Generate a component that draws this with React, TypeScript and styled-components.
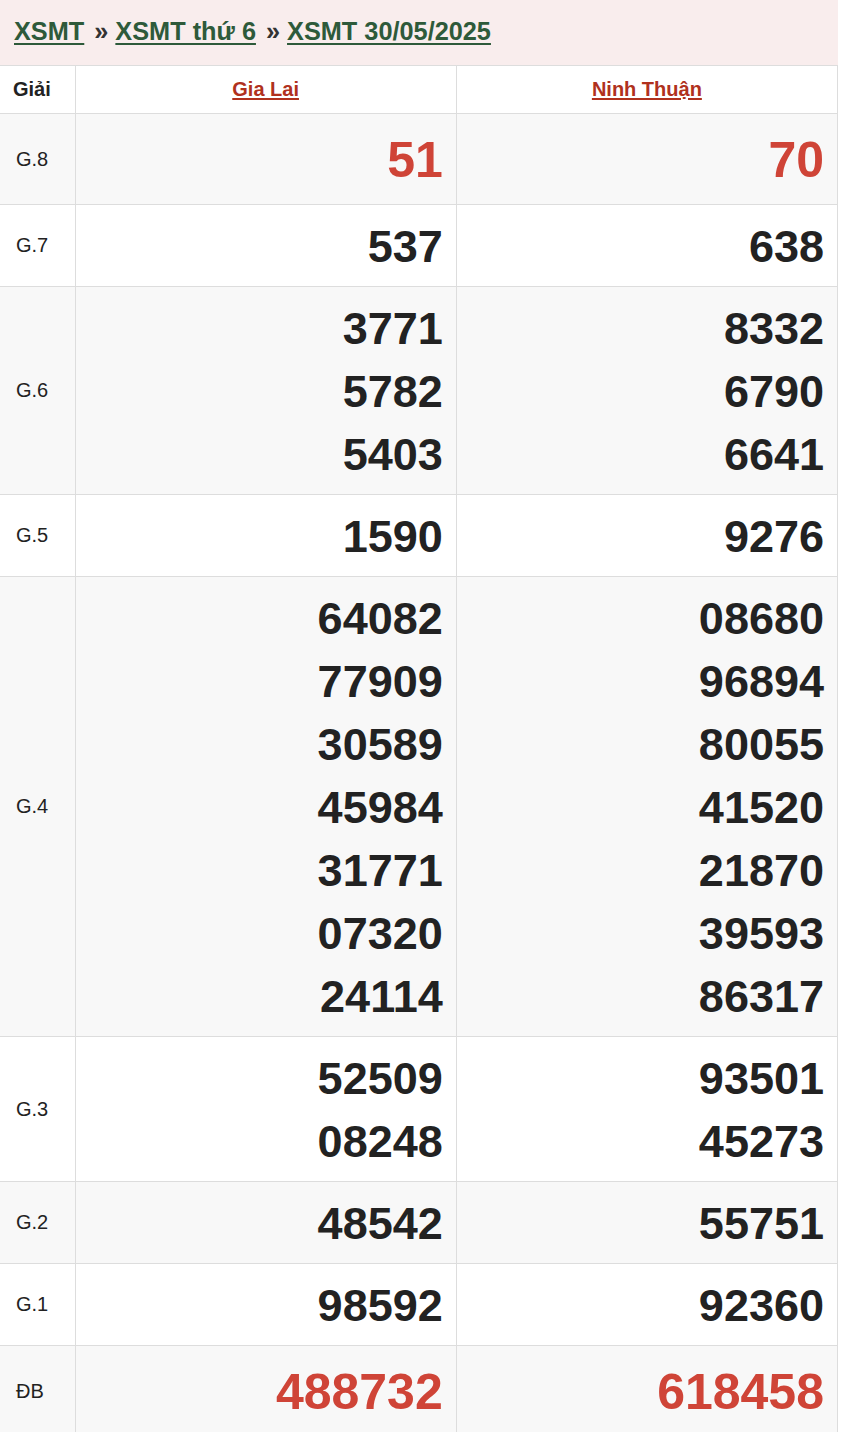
import styled, { createGlobalStyle } from "styled-components";

const GlobalStyle = createGlobalStyle`
  body {
    margin: 0;
    background: #fff;
    font-family: "Liberation Sans", Arial, sans-serif;
    color: #222;
  }
`;

interface IPrize {
  name: string;
  left: string[];
  right: string[];
  special?: boolean;
}

const prizes: IPrize[] = [
  { name: "G.8", left: ["51"], right: ["70"], special: true },
  { name: "G.7", left: ["537"], right: ["638"] },
  { name: "G.6", left: ["3771", "5782", "5403"], right: ["8332", "6790", "6641"] },
  { name: "G.5", left: ["1590"], right: ["9276"] },
  {
    name: "G.4",
    left: ["64082", "77909", "30589", "45984", "31771", "07320", "24114"],
    right: ["08680", "96894", "80055", "41520", "21870", "39593", "86317"],
  },
  { name: "G.3", left: ["52509", "08248"], right: ["93501", "45273"] },
  { name: "G.2", left: ["48542"], right: ["55751"] },
  { name: "G.1", left: ["98592"], right: ["92360"] },
  { name: "ĐB", left: ["488732"], right: ["618458"], special: true },
];

export default function App(): JSX.Element {
  return (
    <>
      <GlobalStyle />
      <Wrapper>
        <Breadcrumb>
          <Crumb href="#">XSMT</Crumb>
          <Sep>»</Sep>
          <Crumb href="#">XSMT thứ 6</Crumb>
          <Sep>»</Sep>
          <Crumb href="#">XSMT 30/05/2025</Crumb>
        </Breadcrumb>
        <Table>
          <colgroup>
            <col style={{ width: 75 }} />
            <col />
            <col />
          </colgroup>
          <thead>
            <tr>
              <HeadCell>Giải</HeadCell>
              <HeadCell>
                <Province href="#">Gia Lai</Province>
              </HeadCell>
              <HeadCell>
                <Province href="#">Ninh Thuận</Province>
              </HeadCell>
            </tr>
          </thead>
          <tbody>
            {prizes.map((p, i) => (
              <Row key={p.name} striped={i % 2 === 0}>
                <LabelCell>{p.name}</LabelCell>
                <NumberCell>
                  {p.left.map((n, j) => (
                    <Number key={j} special={!!p.special}>{n}</Number>
                  ))}
                </NumberCell>
                <NumberCell>
                  {p.right.map((n, j) => (
                    <Number key={j} special={!!p.special}>{n}</Number>
                  ))}
                </NumberCell>
              </Row>
            ))}
          </tbody>
        </Table>
      </Wrapper>
    </>
  );
}

const Wrapper = styled.div`
  width: 838px;
`;

const Breadcrumb = styled.div`
  height: 65px;
  box-sizing: border-box;
  padding: 13px 14px 0;
  background: #f9eded;
  font-size: 25.3px;
  font-weight: 700;
  line-height: 36px;
  white-space: nowrap;
`;

const Crumb = styled.a`
  color: #2e5a3a;
  text-decoration: underline;
  text-decoration-thickness: 2px;
  text-underline-offset: 3px;
`;

const Sep = styled.span`
  color: #333;
  margin: 0 7px 0 10px;
`;

const Table = styled.table`
  width: 838px;
  border-collapse: collapse;
  table-layout: fixed;
`;

const HeadCell = styled.th`
  border: 1px solid #dddddd;
  border-left: none;
  padding: 8px 0 9px;
  line-height: 30px;
  font-size: 20px;
  font-weight: 700;
  color: #222;
  text-align: center;

  &:first-child {
    text-align: left;
    padding-left: 13px;
  }
`;

const Province = styled.a`
  color: #b0311d;
  text-decoration: underline;
  text-underline-offset: 2px;
`;

const Row = styled.tr<{ striped: boolean }>`
  background: ${(p) => (p.striped ? "#f8f8f8" : "#ffffff")};
`;

const LabelCell = styled.td`
  border: 1px solid #dddddd;
  border-left: none;
  padding: 0 0 0 16px;
  font-size: 20px;
  color: #222;
  vertical-align: middle;
`;

const NumberCell = styled.td`
  border: 1px solid #dddddd;
  padding: 10px 13px 8px 0;
  text-align: right;
  vertical-align: middle;
`;

const Number = styled.div<{ special: boolean }>`
  font-weight: 700;
  font-size: ${(p) => (p.special ? "50px" : "45px")};
  line-height: ${(p) => (p.special ? "72px" : "63px")};
  color: ${(p) => (p.special ? "#cf4437" : "#222222")};
`;
